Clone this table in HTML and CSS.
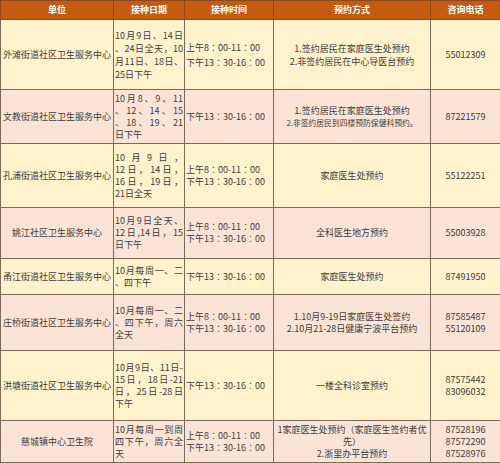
FILE: index.html
```html
<!DOCTYPE html>
<html lang="zh-CN">
<head>
<meta charset="utf-8">
<title>接种预约</title>
<link rel="stylesheet" href="styles.css">
</head>
<body>
<table class="sheet">
  <colgroup>
    <col class="c-name"><col class="c-date"><col class="c-time"><col class="c-way"><col class="c-tel">
  </colgroup>
  <thead>
    <tr class="head">
      <th>单位</th><th>接种日期</th><th>接种时间</th><th>预约方式</th><th>咨询电话</th>
    </tr>
  </thead>
  <tbody>
    <tr class="y r1">
      <td class="name">外滩街道社区卫生服务中心</td>
      <td class="date"><span class="ln j">10月9日、14日</span><span class="ln j">、24日全天，10</span><span class="ln j">月11日、18日、</span><span class="ln">25日下午</span></td>
      <td class="time wide" lang="zh-TW"><span class="ln">上午8：00-11：00</span><span class="ln">下午13：30-16：00</span></td>
      <td class="way">1.签约居民在家庭医生处预约<br>2.非签约居民在中心导医台预约</td>
      <td class="tel">55012309</td>
    </tr>
    <tr class="p r2">
      <td class="name">文教街道社区卫生服务中心</td>
      <td class="date"><span class="ln j">10月8、9、11</span><span class="ln j">、12、14、15</span><span class="ln j">、18、19、21</span><span class="ln">日下午</span></td>
      <td class="time" lang="zh-TW"><span class="ln">下午13：30-16：00</span></td>
      <td class="way">1.签约居民在家庭医生处预约<br><span class="small">2.非签约居民到四楼预防保健科预约。</span></td>
      <td class="tel">87221579</td>
    </tr>
    <tr class="y r3">
      <td class="name">孔浦街道社区卫生服务中心</td>
      <td class="date"><span class="ln j">10月9日，</span><span class="ln j">12日，14日，</span><span class="ln j">16日，19日，</span><span class="ln">21日全天</span></td>
      <td class="time" lang="zh-TW"><span class="ln">上午8：00-11：00</span><span class="ln">下午13：30-16：00</span></td>
      <td class="way">家庭医生处预约</td>
      <td class="tel">55122251</td>
    </tr>
    <tr class="p r4">
      <td class="name">姚江社区卫生服务中心</td>
      <td class="date"><span class="ln j">10月9日全天、</span><span class="ln j">12日,14日，15</span><span class="ln">日下午</span></td>
      <td class="time" lang="zh-TW"><span class="ln">上午8：00-11：00</span><span class="ln">下午13：30-16：00</span></td>
      <td class="way">全科医生地方预约</td>
      <td class="tel">55003928</td>
    </tr>
    <tr class="y r5">
      <td class="name">甬江街道社区卫生服务中心</td>
      <td class="date"><span class="ln j">10月每周一、二</span><span class="ln">、四下午</span></td>
      <td class="time" lang="zh-TW"><span class="ln">下午13：30-16：00</span></td>
      <td class="way">家庭医生处预约</td>
      <td class="tel">87491950</td>
    </tr>
    <tr class="p r6">
      <td class="name">庄桥街道社区卫生服务中心</td>
      <td class="date"><span class="ln j">10月每周一、二</span><span class="ln j">、四下午，周六</span><span class="ln">全天</span></td>
      <td class="time" lang="zh-TW"><span class="ln">上午8：00-11：00</span><span class="ln">下午13：30-16：00</span></td>
      <td class="way">1.10月9-19日家庭医生处签约<br>2.10月21-28日健康宁波平台预约</td>
      <td class="tel">87585487<br>55120109</td>
    </tr>
    <tr class="y r7">
      <td class="name">洪塘街道社区卫生服务中心</td>
      <td class="date"><span class="ln j">10月9日、11日-</span><span class="ln j">15日，18日-21</span><span class="ln j">日，25日-28日</span><span class="ln">下午</span></td>
      <td class="time" lang="zh-TW"><span class="ln">下午13：30-16：00</span></td>
      <td class="way">一楼全科诊室预约</td>
      <td class="tel">87575442<br>83096032</td>
    </tr>
    <tr class="p r8">
      <td class="name">慈城镇中心卫生院</td>
      <td class="date"><span class="ln j">10月每周一到周</span><span class="ln j">四下午，周六全</span><span class="ln">天</span></td>
      <td class="time" lang="zh-TW"><span class="ln">上午8：00-11：00</span><span class="ln">下午13：30-16：00</span></td>
      <td class="way">1家庭医生处预约（家庭医生签约者优<br>先）<br>2.浙里办平台预约</td>
      <td class="tel">87528196<br>87572290<br>87528976</td>
    </tr>
  </tbody>
</table>
</body>
</html>
```

FILE: styles.css
```css
html, body {
  margin: 0;
  padding: 0;
  background: #ffffff;
}

.sheet {
  border-collapse: collapse;
  table-layout: fixed;
  width: 500px;
  font-family: "Noto Sans CJK SC", "Microsoft YaHei", sans-serif;
  font-size: 9px;
  line-height: 12px;
  color: #3d3d3d;
}

.c-name { width: 113px; }
.c-date { width: 71px; }
.c-time { width: 89px; }
.c-way { width: 157px; }
.c-tel { width: 70px; }

.sheet th,
.sheet td {
  border: 1px solid #7b6a58;
  padding: 0 1px;
  vertical-align: middle;
  overflow: hidden;
}

.head th {
  background: #c55a11;
  color: #ffffff;
  font-weight: bold;
  text-align: center;
  border-color: #8a4a1c;
  height: 18px;
  padding: 0;
}

.y td { background: #fff2cc; }
.p td { background: #fbe4d5; }

.r1 { height: 70px; }
.r2 { height: 54px; }
.r3 { height: 64px; }
.r4 { height: 51px; }
.r5 { height: 36px; }
.r6 { height: 56px; }
.r7 { height: 70px; }
.r8 { height: 42px; }

.r1 td { line-height: 13px; }

.name {
  text-align: center;
  white-space: nowrap;
  padding: 0;
}

.date {
  padding: 0 1px 0 2px;
}

.ln {
  display: block;
  white-space: nowrap;
  text-align: left;
}

.ln.j {
  text-align: justify;
  text-align-last: justify;
}

.time {
  padding-left: 2px;
  font-family: "Noto Sans CJK TC", "Noto Sans CJK SC", sans-serif;
}

.r1 .time.wide { line-height: 15px; }

.way {
  text-align: center;
  white-space: nowrap;
}

.way .small {
  font-size: 7.8px;
}

.tel {
  text-align: center;
}
```
